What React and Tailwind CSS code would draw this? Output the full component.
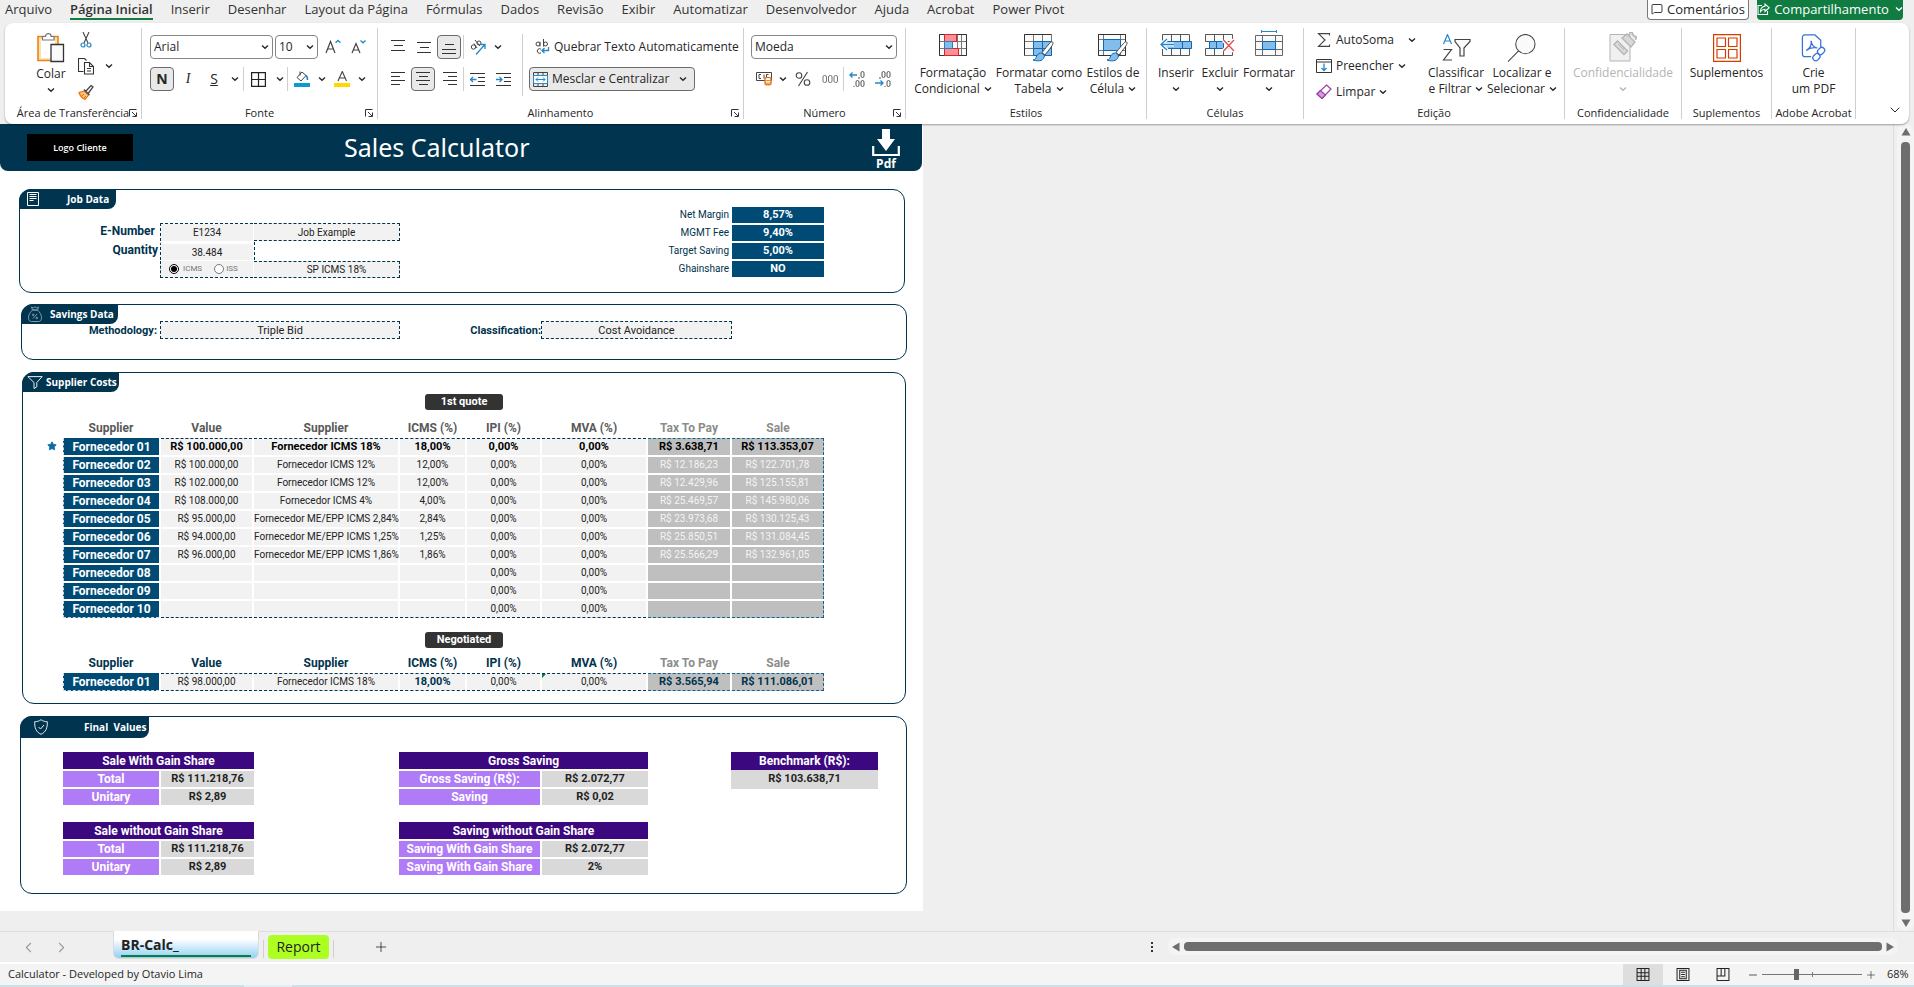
import { useState } from 'react';
import { ChevronDown, ChevronLeft, ChevronRight, Plus, Minus, Star, MessageSquare } from 'lucide-react';

const MENU = [
  'Arquivo', 'Página Inicial', 'Inserir', 'Desenhar', 'Layout da Página', 'Fórmulas', 'Dados', 'Revisão',
  'Exibir', 'Automatizar', 'Desenvolvedor', 'Ajuda', 'Acrobat', 'Power Pivot',
];

const QUOTES = [
  ['Fornecedor 01', 'R$ 100.000,00', 'Fornecedor ICMS 18%', '18,00%', '0,00%', '0,00%', 'R$ 3.638,71', 'R$ 113.353,07'],
  ['Fornecedor 02', 'R$ 100.000,00', 'Fornecedor ICMS 12%', '12,00%', '0,00%', '0,00%', 'R$ 12.186,23', 'R$ 122.701,78'],
  ['Fornecedor 03', 'R$ 102.000,00', 'Fornecedor ICMS 12%', '12,00%', '0,00%', '0,00%', 'R$ 12.429,96', 'R$ 125.155,81'],
  ['Fornecedor 04', 'R$ 108.000,00', 'Fornecedor ICMS 4%', '4,00%', '0,00%', '0,00%', 'R$ 25.469,57', 'R$ 145.980,06'],
  ['Fornecedor 05', 'R$ 95.000,00', 'Fornecedor ME/EPP ICMS 2,84%', '2,84%', '0,00%', '0,00%', 'R$ 23.973,68', 'R$ 130.125,43'],
  ['Fornecedor 06', 'R$ 94.000,00', 'Fornecedor ME/EPP ICMS 1,25%', '1,25%', '0,00%', '0,00%', 'R$ 25.850,51', 'R$ 131.084,45'],
  ['Fornecedor 07', 'R$ 96.000,00', 'Fornecedor ME/EPP ICMS 1,86%', '1,86%', '0,00%', '0,00%', 'R$ 25.566,29', 'R$ 132.961,05'],
  ['Fornecedor 08', '', '', '', '0,00%', '0,00%', '', ''],
  ['Fornecedor 09', '', '', '', '0,00%', '0,00%', '', ''],
  ['Fornecedor 10', '', '', '', '0,00%', '0,00%', '', ''],
];

const NEGOTIATED = [
  ['Fornecedor 01', 'R$ 98.000,00', 'Fornecedor ICMS 18%', '18,00%', '0,00%', '0,00%', 'R$ 3.565,94', 'R$ 111.086,01'],
];

const COLUMNS = ['Supplier', 'Value', 'Supplier', 'ICMS (%)', 'IPI (%)', 'MVA (%)', 'Tax To Pay', 'Sale'];

/* ---------- ribbon building blocks ---------- */

const Chevron = ({ className = '' }) => (
  <svg viewBox="0 0 8 8" className={`h-2 w-2 shrink-0 ${className}`} fill="none" stroke="currentColor" strokeWidth="1.4">
    <path d="M1 2.5 4 5.2 7 2.5" />
  </svg>
);

const Launcher = () => (
  <svg viewBox="0 0 8 8" className="h-2 w-2" fill="none" stroke="#333" strokeWidth="1">
    <path d="M.5 7.5V.5H7.5M3 3l4 4M7.5 3.5v4h-4" />
  </svg>
);

const Group = ({ label, width, launcher = false, children }) => (
  <section className={`flex shrink-0 flex-col self-start border-r border-[#cfcfcf] ${width}`}>
    <div className="flex h-[79px]">{children}</div>
    <div className="relative flex h-3 items-center justify-center text-[11px] whitespace-nowrap">
      {label}
      {launcher && (
        <button type="button" aria-label={`Opções de ${label}`} className="absolute top-0.5 right-1">
          <Launcher />
        </button>
      )}
    </div>
  </section>
);

const Divider = ({ className = 'h-6' }) => <div className={`w-px shrink-0 bg-[#cfcfcf] ${className}`} />;

const IconButton = ({ label, width = 'w-[26px]', pressed = false, children }) => (
  <button
    type="button"
    aria-label={label}
    aria-pressed={pressed}
    className={`flex h-6 shrink-0 items-center justify-center rounded ${width} ${pressed ? 'border border-[#6b6b6b] bg-[#e9e9e9]' : ''}`}
  >
    {children}
  </button>
);

const BigButton = ({ icon, lines, width, inline = true, disabled = false, arrow = true }) => (
  <button
    type="button"
    disabled={disabled}
    className={`flex shrink-0 flex-col items-center self-start pt-[3px] text-xs leading-4 whitespace-nowrap ${width} ${disabled ? 'text-[#b5b5b5]' : ''}`}
  >
    {icon}
    <span className="mt-[3px]">{lines[0]}</span>
    <span className="flex h-4 items-center gap-1">
      {lines[1]}
      {arrow && <Chevron className={inline ? '' : 'mx-auto'} />}
    </span>
  </button>
);

const SelectBox = ({ label, value, width }) => (
  <label className={`relative flex h-6 shrink-0 items-center rounded border border-[#868686] bg-white ${width}`}>
    <select aria-label={label} defaultValue={value} className="h-full w-full appearance-none bg-transparent pl-[3px] text-xs outline-none">
      <option>{value}</option>
    </select>
    <Chevron className="pointer-events-none absolute right-[3px]" />
  </label>
);

/* ---------- ribbon icons ---------- */

const PasteIcon = () => (
  <svg viewBox="0 0 28 31" className="h-[31px] w-7" fill="none">
    <path d="M1 4.5h20v24H1z" fill="#fbe3a6" stroke="#e8821e" strokeWidth="1.6" />
    <path d="M4 7h14v19H4z" fill="#fff" />
    <path d="M5.500 8V4.500h3a2.800 2.800 0 0 1 5.600 0h3V8z" fill="#fff" stroke="#777" strokeWidth="1.200" />
    <path d="M14 12.500h12.500v17H14z" fill="#fafafa" stroke="#333" strokeWidth="1.300" />
  </svg>
);

const CutIcon = () => (
  <svg viewBox="0 0 12 16" className="h-4 w-3" fill="none">
    <path d="M3 0l5 11M9 0L4 11" stroke="#444" strokeWidth="1.100" />
    <circle cx="3" cy="13" r="2" stroke="#2488c9" strokeWidth="1.200" />
    <circle cx="9" cy="13" r="2" stroke="#2488c9" strokeWidth="1.200" />
  </svg>
);

const CopyIcon = () => (
  <svg viewBox="0 0 16 17" className="h-[17px] w-4" fill="none" stroke="#333" strokeWidth="1.100">
    <path d="M5.500 13.500h-5V.5h6l2 2" />
    <path d="M6.500 4.500h5l4 4v7.500h-9zM11.500 4.500v4h4M9 10.500h4M9 13h4" />
  </svg>
);

const BrushIcon = () => (
  <svg viewBox="0 0 16 16" className="h-4 w-4" fill="none">
    <path d="M1 8.500l5.500-1.500 4 4L7 15.500C4 14 2 12 1 8.500z" fill="#fbc07c" stroke="#e8730c" strokeWidth="1.200" />
    <path d="M6 5.500l5.500 5.500M8 7l5-5.500 2 1.500-4.500 6" stroke="#444" strokeWidth="1.300" />
    <path d="M4 12l2-2M6 14l2-2" stroke="#e8730c" />
  </svg>
);

const BordersIcon = () => (
  <svg viewBox="0 0 15 15" className="h-[15px] w-[15px]" fill="none" stroke="#222" strokeWidth="1.200">
    <path d="M.6 .6h13.800v13.800H.6zM7.500 .6v13.800M.6 7.500h13.800" />
  </svg>
);

const BucketIcon = () => (
  <svg viewBox="0 0 16 16" className="h-4 w-4" fill="none">
    <path d="M8 1L3 6.500l4 3.500 5-5.500zM6 .5v4" stroke="#444" />
    <path d="M11 4.500c2 0 2.500 2 2.500 4.500" stroke="#1f7fc4" strokeWidth="1.600" />
    <path d="M0 12h16v4H0z" fill="#0d9ad3" />
  </svg>
);

const FontColorIcon = () => (
  <svg viewBox="0 0 16 16" className="h-4 w-4" fill="none">
    <path d="M4 10L8.300 .5 12.500 10M5.500 7h5.500" stroke="#444" strokeWidth="1.100" />
    <path d="M0 12h16v4H0z" fill="#ffd800" />
  </svg>
);

const GrowIcon = ({ down = false }) => (
  <svg viewBox="0 0 16 16" className="h-4 w-4" fill="none">
    {down ? (
      <path d="M1 14L5 4.500 9 14M2.500 11h5" stroke="#444" strokeWidth="1.200" />
    ) : (
      <path d="M1 14L5.500 2.500 10 14M2.700 10h5.700" stroke="#444" strokeWidth="1.200" />
    )}
    <path d={down ? 'M9.500 1.500l2.500 2.300 2.500-2.300' : 'M10.500 3.800L13 1.500l2.500 2.300'} stroke="#2488c9" strokeWidth="1.300" />
  </svg>
);

const LINES = {
  top: 'M0 1.500h14M3 6.500h9M0 11.500h14',
  middle: 'M0 3.500h14M3 8.500h9M0 13.500h14',
  bottom: 'M3 5.500h9M0 10.500h14M0 14.500h14',
  left: 'M0 1.500h14M0 5.500h9M0 9.500h14M0 13.500h9',
  center: 'M0 1.500h14M3 5.500h9M0 9.500h14M3 13.500h9',
  right: 'M0 1.500h14M5 5.500h9M0 9.500h14M5 13.500h9',
};

const AlignIcon = ({ kind }) => (
  <svg viewBox="0 0 14 16" className="h-4 w-3.5" stroke="#333" strokeWidth="1">
    <path d={LINES[kind]} />
  </svg>
);

const IndentIcon = ({ inward = false }) => (
  <svg viewBox="0 0 15 15" className="h-[15px] w-[15px]" fill="none">
    <path d="M0 1.500h15M8 5.500h7M8 9.500h7M0 13.500h15" stroke="#333" />
    <path d={inward ? 'M0 7.500h5.500M3.500 5l2.500 2.500L3.500 10' : 'M1 7.500h5.500M3 5L.5 7.500 3 10'} stroke="#2488c9" strokeWidth="1.300" />
  </svg>
);

const OrientationIcon = () => (
  <svg viewBox="0 0 16 16" className="h-4 w-4" fill="none">
    <circle cx="3.500" cy="8" r="2.200" stroke="#444" />
    <path d="M4 4.500l3 4.500M5 1l5 6" stroke="#444" />
    <circle cx="9" cy="4" r="2" stroke="#444" />
    <path d="M6 15.500L15 5.500M10.500 5.500H15V10" stroke="#2488c9" strokeWidth="1.300" />
  </svg>
);

const WrapIcon = () => (
  <svg viewBox="0 0 15 16" className="h-4 w-[15px] shrink-0" fill="none" stroke="#444">
    <circle cx="3" cy="5" r="2" />
    <path d="M5 2.800V7.500M8.500 0v7.500M6 10.200a2.300 2.300 0 1 0 0 3.600" />
    <circle cx="10.500" cy="5" r="2" />
    <path d="M13.500 8v3.500H7.500M9.500 9l-2.500 2.500L9.500 14" stroke="#2488c9" strokeWidth="1.400" />
  </svg>
);

const MergeIcon = () => (
  <svg viewBox="0 0 15 15" className="h-[15px] w-[15px] shrink-0" fill="none">
    <path d="M.5 .5h14v14H.5zM5 .5v3M10 .5v3M5 11.500v3M10 11.500v3" stroke="#444" />
    <path d="M.5 3.500h14v8H.5z" fill="#fff" stroke="#2488c9" />
    <path d="M3 7.500h9M5 5.500l-2 2 2 2M10 5.500l2 2-2 2" stroke="#2488c9" />
  </svg>
);

const CurrencyIcon = () => (
  <svg viewBox="0 0 16 14" className="h-3.5 w-4" fill="none">
    <path d="M.5 .5h15v8H.5z" stroke="#444" />
    <path d="M5 2.500H3v4h2M8 2.500v4M12.500 2.500h-2v3" stroke="#444" />
    <path d="M9 6.500c0-1.500 6-1.500 6 0v5c0 1.800-6 1.800-6 0z" fill="#fff" stroke="#e8730c" strokeWidth="1.300" />
    <path d="M9 8c1 1 5 1 6 0M9 10.500c1 1 5 1 6 0" stroke="#e8730c" />
  </svg>
);

const PercentIcon = () => (
  <svg viewBox="0 0 16 16" className="h-4 w-4" fill="none" stroke="#444" strokeWidth="1.100">
    <circle cx="4" cy="4.500" r="2.800" />
    <circle cx="12" cy="11.500" r="2.800" />
    <path d="M12.500 1L3.500 15" />
  </svg>
);

const ThousandsIcon = () => (
  <svg viewBox="0 0 17 8" className="h-2 w-[17px]" fill="none" stroke="#777">
    <rect x="1" y=".5" width="3.500" height="7" rx="1.500" />
    <rect x="6.500" y=".5" width="3.500" height="7" rx="1.500" />
    <rect x="12" y=".5" width="3.500" height="7" rx="1.500" />
  </svg>
);

const DecimalIcon = ({ less = false }) => (
  <svg viewBox="0 0 16 16" className="h-4 w-4" fill="none">
    <g stroke="#555">
      <rect x="12" y=".5" width="3" height="6" rx="1.500" />
      {less ? <rect x="7" y=".5" width="3" height="6" rx="1.500" /> : <rect x="7" y="9.500" width="3" height="6" rx="1.500" />}
      <rect x="12" y="9.500" width="3" height="6" rx="1.500" />
      <path d={less ? 'M5 6v2M10 15v1' : 'M10 6v2M5 15v1.500'} />
    </g>
    <path d={less ? 'M0 12h8M5.500 9.500L8 12l-2.500 2.500' : 'M1 4h7M3.500 1.500L1 4l2.500 2.500'} stroke="#2488c9" strokeWidth="1.400" />
  </svg>
);

const GRID = 'M.5 .5h27v21H.5zM9.500 .5v21M18.500 .5v21M.5 7.500h27M.5 14.500h27';

const CondFormatIcon = () => (
  <svg viewBox="0 0 28 28" className="h-7 w-7" fill="none">
    <path d="M.5 .5h27v21H.5zM5.500 .5v21M18.500 .5v21M22.500 .5v21M.5 7.500h27M.5 14.500h27" fill="#fafafa" stroke="#777" />
    <path d="M.5 .5h27v21H.5z" stroke="#333" />
    <path d="M5.500 .5h12v7h-12zM5.500 14.500h14v7h-14z" fill="#ff8f94" stroke="#d8232a" />
    <path d="M5.500 7.500h8v7h-8z" fill="#83bdec" stroke="#2b7cc0" />
  </svg>
);

const Paint = () => (
  <g>
    <path d="M28.500 8c1.500 1.500 0 3.500-7.500 13l-3-2.500C25 10 27 7 28.500 8z" fill="#fff" stroke="#444" />
    <path d="M17.500 19l3 2.500c-.5 5-5 6.500-11.500 4.500 3-.5 2.500-2 4-4.500 1-1.800 3-2.500 4.500-2.500z" fill="#83bdec" stroke="#1068b4" />
  </g>
);

const TableFormatIcon = () => (
  <svg viewBox="0 0 30 28" className="h-7 w-[30px]" fill="none">
    <path d={GRID} fill="#fafafa" stroke="#777" />
    <path d="M9.500 7.500h18v14h-18z" fill="#83bdec" />
    <path d="M9.500 7.500h18v14h-18zM18.500 7.500v14M9.500 14.500h18" stroke="#1068b4" />
    <path d="M.5 21.500V.5h27" stroke="#333" />
    <Paint />
  </svg>
);

const CellStyleIcon = () => (
  <svg viewBox="0 0 30 28" className="h-7 w-[30px]" fill="none">
    <path d="M.5 .5h27v21H.5zM5.500 .5v21M22.500 .5v21M.5 5.500h27M.5 16.500h27" fill="#fafafa" stroke="#777" />
    <path d="M.5 21.500V.5h27v21z" stroke="#333" />
    <path d="M5.500 5.500h17v11h-17z" fill="#83bdec" stroke="#1068b4" />
    <Paint />
  </svg>
);

const InsertIcon = () => (
  <svg viewBox="0 0 32 28" className="h-7 w-8" fill="none">
    <path d="M2.500 .5h27v21h-27zM11.500 .5v21M20.500 .5v21M2.500 7.500h27M2.500 14.500h27" fill="#fafafa" stroke="#555" />
    <path d="M0 7h12v8H0z" fill="#fff" />
    <path d="M6.500 7.500h25v7h-25zM22.500 7.500v7" fill="#83bdec" stroke="#1068b4" />
    <path d="M14 10.500H1.500M7 5l-6 5.500L7 16" stroke="#fff" strokeWidth="4" />
    <path d="M14 10.500H1.500M7 5l-6 5.500L7 16" stroke="#2488c9" strokeWidth="1.300" />
  </svg>
);

const DeleteIcon = () => (
  <svg viewBox="0 0 30 28" className="h-7 w-[30px]" fill="none">
    <path d="M.5 .5h27v7H.5zM.5 14.500h27v7H.5zM9.500 .5v7M18.500 .5v7M9.500 14.500v7M18.500 14.500v7" fill="#fafafa" stroke="#555" />
    <path d="M4.500 7.500h14v7h-14zM11.500 7.500v7" fill="#83bdec" stroke="#1068b4" />
    <path d="M18.500 6l10.500 11M29 6L18.500 17" stroke="#fff" strokeWidth="4" />
    <path d="M18.500 6l10.500 11M29 6L18.500 17" stroke="#e5484d" strokeWidth="1.300" />
  </svg>
);

const FormatIcon = () => (
  <svg viewBox="0 0 28 32" className="-mt-1 h-8 w-7" fill="none">
    <path d="M6 1.500h15.500M6.500 0v3M21.500 0v3" stroke="#2488c9" />
    <path d="M.5 5.500h27v20H.5zM7.500 5.500v20M20.500 5.500v20M.5 11.500h27M.5 19.500h27" fill="#fafafa" stroke="#666" />
    <path d="M7.500 11.500h13v8h-13z" fill="#83bdec" stroke="#1068b4" />
  </svg>
);

const SigmaIcon = () => (
  <svg viewBox="0 0 16 14" className="h-3.5 w-4" fill="none" stroke="#444" strokeWidth="1.100">
    <path d="M13.500 2.500V.6H2.500L9 7l-6.500 6.400h11V11.500" />
  </svg>
);

const FillIcon = () => (
  <svg viewBox="0 0 16 14" className="h-3.5 w-4" fill="none">
    <path d="M.5 .5h15v13H.5zM.5 3h15" stroke="#333" />
    <path d="M8 4.500v7M5.500 9L8 11.500 10.500 9" stroke="#2488c9" strokeWidth="1.300" />
  </svg>
);

const EraserIcon = () => (
  <svg viewBox="0 0 16 16" className="h-4 w-4" fill="none">
    <path d="M10.500 1L15 5 6 14.500 1 10z" fill="#fff" stroke="#9b3fa5" strokeWidth="1.200" />
    <path d="M4.500 6.500L1 10l5 4.500 3.500-3.500z" fill="#d79bdd" stroke="#9b3fa5" strokeWidth="1.200" />
  </svg>
);

const SortFilterIcon = () => (
  <svg viewBox="0 0 29 28" className="h-7 w-[29px]" fill="none" strokeWidth="1.200">
    <path d="M1.500 10L5.500 .5l4 9.500M3 7h5" stroke="#2488c9" />
    <path d="M1.500 15.500h8L1.500 26h8.500" stroke="#444" />
    <path d="M13 5.500h15v2L22 14v8h-4v-8l-5-6.500z" fill="#fafafa" stroke="#444" />
  </svg>
);

const FindIcon = () => (
  <svg viewBox="0 0 30 29" className="h-7 w-[30px]" fill="none" stroke="#444" strokeWidth="1.100">
    <circle cx="18.500" cy="10.500" r="10" fill="#fafafa" />
    <path d="M11.500 17.500L.5 28.500" />
  </svg>
);

const SensitivityIcon = () => (
  <svg viewBox="0 0 28 30" className="-mt-0.5 h-[30px] w-7" fill="none" stroke="#b5b5b5">
    <path d="M1 2.500h20v26.500H1z" fill="#f0f0f0" />
    <path d="M8.500 9l10 10-3.500 3.500-10-10z" fill="#dcdcdc" strokeWidth="1.400" />
    <path d="M9 12l6 6" />
    <path d="M13 6l5-4 8 8-4 5zM20 1l3-1 1.500 3.500 3 1.500-1 3" fill="#d8d8d8" strokeWidth="1.400" />
  </svg>
);

const AddinsIcon = () => (
  <svg viewBox="0 0 28 28" className="h-7 w-7" fill="none" stroke="#d83b01" strokeWidth="1.200">
    <path d="M.6 .6h26.800v26.800H.6zM4 4h8.500v8.500H4zM15.500 4H24v8.500h-8.500zM4 15.500h8.500V24H4zM15.500 15.500H24V24h-8.500z" />
  </svg>
);

const PdfIcon = () => (
  <svg viewBox="0 0 26 29" className="h-7 w-[26px]" fill="none" stroke="#3a72d8" strokeWidth="1.300">
    <path d="M10 23.500H3.500a2.500 2.500 0 0 1-2.500-2.500V3.500A2.500 2.500 0 0 1 3.500 1H14l6 5.500v7" />
    <path d="M5 17c4-2 5.500-6 5-10 .5 4 3 7 6.500 7.500C12 13.500 8 14.500 5 17z" />
    <rect x="16.500" y="15" width="8" height="6" rx="3" transform="rotate(-45 20 18)" />
    <rect x="11.500" y="21" width="8" height="6" rx="3" transform="rotate(-45 15.500 24)" />
  </svg>
);

const ShareIcon = () => (
  <svg viewBox="0 0 13 12" className="h-3 w-[13px]" fill="none" stroke="currentColor" strokeWidth="1.100">
    <path d="M5 2.500H1v9h9.500V8M8 1v2.200C5 3.500 3.500 5.500 3.500 8.500 4.500 7 6 6.200 8 6.200V8.500L12.200 4.700z" />
  </svg>
);

/* ---------- ribbon ---------- */

const MenuBar = () => (
  <nav className="flex h-[23px] items-start justify-between pr-[11px] pl-[5px] text-[13px] leading-[18px]">
    <div className="flex gap-[18px] text-[#333]">
      {MENU.map((item) => (
        <button
          key={item}
          type="button"
          className={`flex h-5 shrink-0 items-start whitespace-nowrap ${item === 'Página Inicial' ? 'border-b-2 border-[#107c41] font-semibold' : ''}`}
        >
          {item}
        </button>
      ))}
    </div>
    <div className="flex gap-2">
      <button type="button" className="flex h-5 w-[102px] items-center justify-center gap-1 rounded-b border border-t-0 border-[#777] bg-white pb-px">
        <MessageSquare size={12} strokeWidth={1.8} /> Comentários
      </button>
      <button type="button" className="flex h-5 w-[146px] items-center justify-center gap-1 rounded-b bg-[#107c41] pb-0.5 text-white">
        <ShareIcon /> Compartilhamento <Chevron className="ml-0.5" />
      </button>
    </div>
  </nav>
);

const ClipboardGroup = () => (
  <Group label="Área de Transferência" width="w-[137px]" launcher>
    <button type="button" className="ml-6 flex w-11 flex-col items-center self-start pt-1 text-xs leading-4">
      <PasteIcon />
      <span className="mt-[3px]">Colar</span>
      <span className="flex h-4 items-center">
        <Chevron />
      </span>
    </button>
    <div className="flex flex-col gap-0.5">
      <IconButton label="Recortar"><CutIcon /></IconButton>
      <div className="flex">
        <IconButton label="Copiar"><CopyIcon /></IconButton>
        <IconButton label="Opções de cópia" width="w-5"><Chevron /></IconButton>
      </div>
      <IconButton label="Pincel de Formatação"><BrushIcon /></IconButton>
    </div>
  </Group>
);

const FontGroup = () => (
  <Group label="Fonte" width="w-[236px]" launcher>
    <div className="flex flex-col gap-2 pt-[7px] pl-2">
      <div className="flex">
        <SelectBox label="Fonte" value="Arial" width="w-[123px]" />
        <div className="w-0.5" />
        <SelectBox label="Tamanho" value="10" width="w-[43px]" />
        <div className="w-0.5" />
        <IconButton label="Aumentar fonte"><GrowIcon /></IconButton>
        <IconButton label="Diminuir fonte"><GrowIcon down /></IconButton>
      </div>
      <div className="flex">
        <IconButton label="Negrito" width="w-6" pressed><span className="text-sm font-bold">N</span></IconButton>
        <IconButton label="Itálico" width="w-7"><span className="font-['Liberation_Serif'] text-sm italic">I</span></IconButton>
        <IconButton label="Sublinhado" width="w-6"><span className="text-sm underline">S</span></IconButton>
        <IconButton label="Opções de sublinhado" width="w-[17px]"><Chevron /></IconButton>
        <Divider />
        <IconButton label="Bordas" width="w-7"><BordersIcon /></IconButton>
        <IconButton label="Opções de bordas" width="w-[15px]"><Chevron /></IconButton>
        <Divider />
        <IconButton label="Cor de preenchimento" width="w-7"><BucketIcon /></IconButton>
        <IconButton label="Opções de preenchimento" width="w-3"><Chevron /></IconButton>
        <IconButton label="Cor da fonte" width="w-7"><FontColorIcon /></IconButton>
        <IconButton label="Opções de cor" width="w-3"><Chevron /></IconButton>
      </div>
    </div>
  </Group>
);

const AlignGroup = () => (
  <Group label="Alinhamento" width="w-[366px]" launcher>
    <div className="flex flex-col gap-2 pt-[7px] pl-[7px]">
      <div className="flex">
        <IconButton label="Alinhar em cima"><AlignIcon kind="top" /></IconButton>
        <IconButton label="Alinhar no meio"><AlignIcon kind="middle" /></IconButton>
        <IconButton label="Alinhar embaixo" width="w-6" pressed><AlignIcon kind="bottom" /></IconButton>
        <div className="w-0.5" />
        <Divider />
        <IconButton label="Orientação" width="w-7"><OrientationIcon /></IconButton>
        <IconButton label="Opções de orientação" width="w-3"><Chevron /></IconButton>
      </div>
      <div className="flex">
        <IconButton label="Alinhar à esquerda"><AlignIcon kind="left" /></IconButton>
        <IconButton label="Centralizar" width="w-6" pressed><AlignIcon kind="center" /></IconButton>
        <div className="w-0.5" />
        <IconButton label="Alinhar à direita"><AlignIcon kind="right" /></IconButton>
        <Divider />
        <IconButton label="Diminuir recuo"><IndentIcon /></IconButton>
        <IconButton label="Aumentar recuo"><IndentIcon inward /></IconButton>
      </div>
    </div>
    <Divider className="mt-1.5 ml-1.5 h-[62px]" />
    <div className="flex flex-col gap-2 pt-[7px] pl-1.5 text-xs whitespace-nowrap">
      <button type="button" className="flex h-6 items-center gap-1 pl-1.5">
        <WrapIcon /> Quebrar Texto Automaticamente
      </button>
      <button type="button" aria-pressed="true" className="flex h-6 w-[166px] items-center gap-1 rounded border border-[#6b6b6b] bg-[#e9e9e9] px-[3px]">
        <MergeIcon /> Mesclar e Centralizar <Chevron className="mr-1 ml-auto" />
      </button>
    </div>
  </Group>
);

const NumberGroup = () => (
  <Group label="Número" width="w-[162px]" launcher>
    <div className="flex flex-col gap-2 pt-[7px] pl-[7px]">
      <SelectBox label="Formato de número" value="Moeda" width="w-[146px]" />
      <div className="flex">
        <IconButton label="Formato de contabilização"><CurrencyIcon /></IconButton>
        <IconButton label="Opções de moeda" width="w-3"><Chevron /></IconButton>
        <IconButton label="Porcentagem" width="w-7"><PercentIcon /></IconButton>
        <IconButton label="Separador de milhares"><ThousandsIcon /></IconButton>
        <Divider />
        <IconButton label="Aumentar casas decimais"><DecimalIcon /></IconButton>
        <IconButton label="Diminuir casas decimais"><DecimalIcon less /></IconButton>
      </div>
    </div>
  </Group>
);

const EditGroup = () => (
  <Group label="Edição" width="w-[261px]">
    <div className="flex w-[122px] shrink-0 flex-col gap-0.5 pl-3 text-xs whitespace-nowrap">
      <button type="button" className="flex h-6 items-center gap-1">
        <SigmaIcon /> AutoSoma <Chevron className="mr-2.5 ml-auto" />
      </button>
      <button type="button" className="flex h-6 items-center gap-1">
        <FillIcon /> Preencher <Chevron />
      </button>
      <button type="button" className="flex h-6 items-center gap-1">
        <EraserIcon /> Limpar <Chevron />
      </button>
    </div>
    <div className="flex pt-[3px]">
      <BigButton icon={<SortFilterIcon />} lines={['Classificar', 'e Filtrar']} width="w-[60px]" />
      <BigButton icon={<FindIcon />} lines={['Localizar e', 'Selecionar']} width="w-[72px]" />
    </div>
  </Group>
);

const Ribbon = () => (
  <div className="relative z-10 mx-[5px] flex h-[101px] shrink-0 rounded-lg bg-white pt-[5px] text-[#262626] shadow-[0_1px_2px_rgba(0,0,0,0.35)]">
    <ClipboardGroup />
    <FontGroup />
    <AlignGroup />
    <NumberGroup />
    <Group label="Estilos" width="w-[241px]">
      <div className="flex gap-1 pt-[3px] pl-2">
        <BigButton icon={<CondFormatIcon />} lines={['Formatação', 'Condicional']} width="w-[78px]" />
        <BigButton icon={<TableFormatIcon />} lines={['Formatar como', 'Tabela']} width="w-[86px]" />
        <BigButton icon={<CellStyleIcon />} lines={['Estilos de', 'Célula']} width="w-[54px]" />
      </div>
    </Group>
    <Group label="Células" width="w-[157px]">
      <div className="flex pt-[3px] pl-2">
        <BigButton icon={<InsertIcon />} lines={['Inserir', '']} width="w-[42px]" inline={false} />
        <BigButton icon={<DeleteIcon />} lines={['Excluir', '']} width="w-[46px]" inline={false} />
        <BigButton icon={<FormatIcon />} lines={['Formatar', '']} width="w-[52px]" inline={false} />
      </div>
    </Group>
    <EditGroup />
    <Group label="Confidencialidade" width="w-[117px]">
      <div className="flex w-full justify-center pt-[3px]">
        <BigButton icon={<SensitivityIcon />} lines={['Confidencialidade', '']} width="w-[100px]" inline={false} disabled />
      </div>
    </Group>
    <Group label="Suplementos" width="w-[90px]">
      <div className="flex w-full justify-center pt-[3px]">
        <BigButton icon={<AddinsIcon />} lines={['Suplementos', '']} width="w-[80px]" arrow={false} />
      </div>
    </Group>
    <Group label="Adobe Acrobat" width="w-[84px]">
      <div className="flex w-full justify-center pt-[3px]">
        <BigButton icon={<PdfIcon />} lines={['Crie', 'um PDF']} width="w-[60px]" arrow={false} />
      </div>
    </Group>
    <button type="button" aria-label="Recolher faixa de opções" className="mr-1.5 mb-1.5 ml-auto self-end">
      <ChevronDown size={16} strokeWidth={1.5} />
    </button>
  </div>
);

/* ---------- worksheet ---------- */

const JobIcon = () => (
  <svg viewBox="0 0 12 14" className="h-3.5 w-3" fill="none" stroke="#fff">
    <path d="M.5 .5h11v13H.5zM2.500 2.500h7M2.500 4.500h7M2.500 6.500h7M2.500 8.500h4" />
  </svg>
);

const BagIcon = () => (
  <svg viewBox="0 0 14 16" className="h-4 w-3.5" fill="none" stroke="#8ea6b3" strokeWidth=".9">
    <path d="M4.500 4L3.500 1l2 .8L7 .8l1.500 1 2-.8-1 3zM4.500 4h5c2 2 4 4.500 4 7.500 0 2.500-1 4-3 4h-7c-2 0-3-1.500-3-4 0-3 2-5.500 4-7.500zM5 12.500L9 8" />
    <circle cx="5.200" cy="8.800" r=".8" />
    <circle cx="8.800" cy="12" r=".8" />
  </svg>
);

const FunnelIcon = () => (
  <svg viewBox="0 0 16 13" className="h-[13px] w-4" fill="none" stroke="#e7eef2">
    <path d="M.8 .6h14.400L9.800 6.500v4.300L7 12.500v-6z" />
  </svg>
);

const ShieldIcon = () => (
  <svg viewBox="0 0 14 16" className="h-4 w-3.5" fill="none" stroke="#dfe8ee">
    <path d="M7 .7c2 1.500 4 2 6.300 2C13.500 9 12 13 7 15.300 2 13 .5 9 .7 2.700 3 2.700 5 2.200 7 .7zM4.500 8l2 2L10 6" />
  </svg>
);

const Panel = ({ title, icon, tab, className, children }) => (
  <section className={`rounded-xl border border-[#00334d] ${className}`}>
    <h2 className={`-mt-px -ml-px flex items-center rounded-tl-xl rounded-br-lg bg-[#00344f] font-['Open_Sans','Noto_Sans',sans-serif] text-[10px] font-bold whitespace-pre text-white ${tab}`}>
      {icon}
      {title}
    </h2>
    {children}
  </section>
);

const RateRow = ({ label, value }) => (
  <tr>
    <th scope="row" className="h-4 pr-[3px] text-right text-[10px] font-normal text-[#00334d]">{label}</th>
    <td className="h-4 w-[92px] bg-[#004b76] text-center text-[11px] font-bold text-white">{value}</td>
  </tr>
);

const JobPanel = () => {
  const [tax, setTax] = useState('icms');
  return (
    <Panel title="Job Data" icon={<JobIcon />} tab="h-5 w-[97px] gap-7 pl-2" className="mr-[18px] ml-[19px] h-[104px]">
      <div className="flex text-[10px] leading-4 text-[#222]">
        <div className="mt-[14px] grid grid-cols-[139px_93px_146px] gap-x-px text-center">
          <label htmlFor="enumber" className="pr-1 text-right text-xs font-bold text-[#00334d]">E-Number</label>
          <input id="enumber" defaultValue="E1234" className="h-[18px] w-full border-t border-l border-dashed border-[#00334d] bg-[#f2f2f2] text-center" />
          <input aria-label="Job" defaultValue="Job Example" className="h-[18px] w-full border border-l-0 border-dashed border-[#00334d] bg-[#f2f2f2] text-center" />
          <label htmlFor="quantity" className="pr-px text-right text-xs font-bold text-[#00334d]">Quantity</label>
          <input id="quantity" defaultValue="38.484" className="h-[18px] w-full border-t-2 border-l border-dashed border-[#00334d] border-t-white bg-[#f2f2f2] text-center [border-top-style:solid]" />
          <div className="h-[18px] border-l border-dashed border-[#00334d]" />
          <span />
          <fieldset className="flex h-[17px] items-center gap-3 border-b border-l border-dashed border-[#00334d] bg-[#f2f2f2] pl-2 text-[8px] text-[#777]">
            <label className="flex items-center gap-1">
              <input type="radio" name="tax" className="h-2.5 w-2.5 accent-black" checked={tax === 'icms'} onChange={() => setTax('icms')} />
              ICMS
            </label>
            <label className="flex items-center gap-0.5">
              <input type="radio" name="tax" className="h-2.5 w-2.5 accent-black" checked={tax === 'iss'} onChange={() => setTax('iss')} />
              ISS
            </label>
          </fieldset>
          <input aria-label="Regime" defaultValue="SP ICMS 18%" className="h-[17px] w-full border border-l-0 border-dashed border-[#00334d] bg-[#f2f2f2] pl-5 text-center" />
        </div>
        <table className="-mt-1 mr-20 ml-auto h-fit border-separate border-spacing-x-0 border-spacing-y-0.5">
          <tbody>
            <RateRow label="Net Margin" value="8,57%" />
            <RateRow label="MGMT Fee" value="9,40%" />
            <RateRow label="Target Saving" value="5,00%" />
            <RateRow label="Ghainshare" value="NO" />
          </tbody>
        </table>
      </div>
    </Panel>
  );
};

const SavingsPanel = () => (
  <Panel title="Savings Data" icon={<BagIcon />} tab="h-5 w-[97px] gap-2 pl-[7px]" className="mt-[11px] mr-4 ml-[21px] h-14">
    <div className="-mt-[3px] flex text-[11px] text-[#222]">
      <label htmlFor="method" className="w-[138px] pt-0.5 pr-[3px] text-right font-bold text-[#00334d]">Methodology:</label>
      <input id="method" defaultValue="Triple Bid" className="h-[18px] w-[240px] border border-dashed border-[#00334d] bg-[#f2f2f2] text-center" />
      <label htmlFor="classification" className="w-[141px] pt-0.5 text-right font-bold text-[#00334d]">Classification:</label>
      <input id="classification" defaultValue="Cost Avoidance" className="h-[18px] w-[191px] border border-dashed border-[#00334d] bg-[#f2f2f2] text-center" />
    </div>
  </Panel>
);

const cellTone = (col, rowIndex, highlight) => {
  if (highlight === 'first') {
    if (rowIndex === 0) return 'text-[11px] font-bold text-black';
    return col > 5 ? 'text-[10px] text-[#f4f4f4]' : 'text-[10px] text-[#222]';
  }
  return col === 3 || col > 5 ? 'text-[11px] font-bold text-[#00334d]' : 'text-[10px] text-[#222]';
};

const QuoteTable = ({ rows, head, highlight }) => (
  <table className="-mt-0.5 ml-[38px] w-[765px] table-fixed border-separate border-spacing-0.5 text-center leading-4 whitespace-nowrap">
    <colgroup>
      <col className="w-[96px]" />
      <col className="w-[91px]" />
      <col className="w-[144px]" />
      <col className="w-[65px]" />
      <col className="w-[73px]" />
      <col className="w-[104px]" />
      <col className="w-[82px]" />
      <col className="w-[92px]" />
    </colgroup>
    <thead>
      <tr>
        {COLUMNS.map((name, i) => (
          <th key={i} scope="col" className={`h-4 p-0 text-xs leading-4 font-bold ${i > 5 ? 'text-[#8c8c8c]' : head}`}>{name}</th>
        ))}
      </tr>
    </thead>
    <tbody>
      {rows.map((row, r) => (
        <tr key={row[0]}>
          {row.map((value, c) => {
            const edges = [
              r === 0 && c > 0 ? 'border-t' : '',
              r === rows.length - 1 ? 'border-b' : '',
              c === 0 ? 'border-l' : '',
              c === 7 ? 'border-r' : '',
            ].join(' ');
            if (c === 0) {
              return (
                <th key={c} scope="row" className={`relative h-4 border-dashed border-[#c9dbe6] bg-[#004b76] p-0 text-xs leading-4 font-bold text-white ${edges}`}>
                  {value}
                  {highlight === 'first' && r === 0 && (
                    <Star size={10} className="absolute top-[3px] -left-[17px] fill-[#0a6aa6] text-[#0a6aa6]" />
                  )}
                </th>
              );
            }
            return (
              <td
                key={c}
                className={`relative h-4 border-dashed p-0 ${c > 5 ? 'border-[#0a6496] bg-[#bfbfbf]' : 'border-[#00334d] bg-[#f2f2f2]'} ${cellTone(c, r, highlight)} ${edges}`}
              >
                {value}
                {highlight === 'last' && c === 5 && (
                  <span className="absolute top-0 left-0 border-t-4 border-r-4 border-t-green-700 border-r-transparent" />
                )}
              </td>
            );
          })}
        </tr>
      ))}
    </tbody>
  </table>
);

const Badge = ({ children }) => (
  <div className="ml-[402px] flex h-4 w-[78px] items-center justify-center rounded-[3px] bg-[#333] text-[11px] font-bold text-white">
    {children}
  </div>
);

const SupplierPanel = () => (
  <Panel title="Supplier Costs" icon={<FunnelIcon />} tab="h-5 w-[97px] gap-[3px] pl-[5px]" className="mt-3 mr-[17px] ml-[22px] h-[332px]">
    <div className="mt-0.5">
      <Badge>1st quote</Badge>
      <div className="h-2.5" />
      <QuoteTable rows={QUOTES} head="text-[#595959]" highlight="first" />
    </div>
    <div className="mt-3">
      <Badge>Negotiated</Badge>
      <div className="h-[7px]" />
      <QuoteTable rows={NEGOTIATED} head="text-[#00334d]" highlight="last" />
    </div>
  </Panel>
);

const ValueTable = ({ title, rows, cols, width }) => (
  <table className={`table-fixed border-separate border-spacing-x-0 border-spacing-y-0.5 text-center leading-4 whitespace-nowrap ${width}`}>
    <colgroup>
      <col className={cols} />
      <col />
    </colgroup>
    <thead>
      <tr>
        <th colSpan={2} className="h-[17px] bg-[#3c0880] p-0 text-xs leading-4 font-bold text-white">{title}</th>
      </tr>
    </thead>
    <tbody>
      {rows.map(([label, value], i) => (
        <tr key={i}>
          <th scope="row" className="h-4 border-r-2 border-white bg-[#b07bf7] p-0 text-xs leading-4 font-bold text-white">{label}</th>
          <td className="h-4 bg-[#d9d9d9] p-0 text-[11px] font-bold text-[#222]">{value}</td>
        </tr>
      ))}
    </tbody>
  </table>
);

const FinalPanel = () => (
  <Panel title="Final  Values" icon={<ShieldIcon />} tab="h-[22px] w-[129px] gap-9 pl-3.5" className="mt-3 mr-4 ml-5 h-[178px]">
    <div className="mt-3 ml-[42px] flex items-start">
      <div className="flex flex-col gap-[13px]">
        <ValueTable title="Sale With Gain Share" cols="w-[98px]" width="w-[191px]" rows={[['Total', 'R$ 111.218,76'], ['Unitary', 'R$ 2,89']]} />
        <ValueTable title="Sale without Gain Share" cols="w-[98px]" width="w-[191px]" rows={[['Total', 'R$ 111.218,76'], ['Unitary', 'R$ 2,89']]} />
      </div>
      <div className="ml-[145px] flex flex-col gap-[13px]">
        <ValueTable title="Gross Saving" cols="w-[143px]" width="w-[249px]" rows={[['Gross Saving (R$):', 'R$ 2.072,77'], ['Saving', 'R$ 0,02']]} />
        <ValueTable title="Saving without Gain Share" cols="w-[143px]" width="w-[249px]" rows={[['Saving With Gain Share', 'R$ 2.072,77'], ['Saving With Gain Share', '2%']]} />
      </div>
      <dl className="mt-0.5 ml-[83px] w-[147px] text-center">
        <dt className="h-[18px] bg-[#3c0880] text-xs leading-[18px] font-bold text-white">Benchmark (R$):</dt>
        <dd className="h-[19px] bg-[#d9d9d9] text-[11px] leading-[18px] font-bold text-[#222]">R$ 103.638,71</dd>
      </dl>
    </div>
  </Panel>
);

const DownloadIcon = () => (
  <svg viewBox="0 0 28 28" className="h-7 w-7" fill="none">
    <path d="M10 0h8v10h5l-9 12-9-12h5z" fill="#fff" />
    <path d="M1.200 17v9h25.600v-9" stroke="#fff" strokeWidth="2.200" />
  </svg>
);

const Sheet = () => (
  <main className="h-[787px] w-[923px] bg-white font-[Roboto,sans-serif]">
    <header className="mr-px flex h-[47px] items-center rounded-b-lg bg-[#00344f] pr-[18px] pl-[27px] font-['Open_Sans','Noto_Sans',sans-serif] text-white">
      <div className="flex h-[27px] w-[106px] items-center justify-center bg-black text-[9px] font-semibold">Logo Cliente</div>
      <h1 className="ml-[211px] font-['Noto_Sans',sans-serif] text-[25px]">Sales Calculator</h1>
      <button type="button" className="ml-auto flex w-9 flex-col items-center pt-1 text-xs leading-[14px] font-bold">
        <DownloadIcon />
        Pdf
      </button>
    </header>
    <div className="pt-[18px]">
      <JobPanel />
      <SavingsPanel />
      <SupplierPanel />
      <FinalPanel />
    </div>
  </main>
);

const VerticalScroll = () => (
  <div className="ml-[3px] flex w-[17px] flex-col items-center gap-1.5 rounded-lg bg-[#f4f4f4] py-1">
    <svg viewBox="0 0 10 8" className="h-2 w-2.5" fill="#6e6e6e"><path d="M5 0l4.500 7.500H.5z" /></svg>
    <div className="w-[9px] flex-1 rounded bg-[#6e6e6e]" />
    <svg viewBox="0 0 10 8" className="h-2 w-2.5" fill="#6e6e6e"><path d="M5 8L9.500 .5H.5z" /></svg>
  </div>
);

const SheetTabs = () => (
  <div className="flex h-8 shrink-0 items-start border-b-2 border-white pr-4">
    <button type="button" aria-label="Planilha anterior" className="mt-[7px] ml-5 text-[#9a9a9a]"><ChevronLeft size={17} strokeWidth={1.5} /></button>
    <button type="button" aria-label="Próxima planilha" className="mt-[7px] ml-4 text-[#9a9a9a]"><ChevronRight size={17} strokeWidth={1.5} /></button>
    <button type="button" className="-mt-px ml-[43px] h-[28px] w-[146px] rounded-b-md border border-t-0 border-[#dcdcdc] bg-gradient-to-b from-white from-30% to-[#8fd0f2] px-[7px] text-left text-sm font-bold text-[#222]">
      <span className="block h-[25px] border-b-2 border-[#107c41] leading-[25px]">BR-Calc_</span>
    </button>
    <Divider className="mt-2 ml-[4px] h-[18px]" />
    <button type="button" className="mt-[3px] ml-1 h-6 w-[61px] rounded bg-[#adff22] text-sm text-[#222]">Report</button>
    <Divider className="mt-2 ml-1 h-[18px]" />
    <button type="button" aria-label="Nova planilha" className="mt-[7px] ml-[39px]"><Plus size={16} strokeWidth={1.2} /></button>
    <div className="mt-[10px] ml-auto flex flex-col gap-[2px]">
      <i className="h-0.5 w-0.5 bg-[#333]" />
      <i className="h-0.5 w-0.5 bg-[#333]" />
      <i className="h-0.5 w-0.5 bg-[#333]" />
    </div>
    <div className="mt-1.5 ml-[15px] flex h-[17px] w-[calc(38%+9px)] items-center gap-1 rounded-lg bg-[#f4f4f4] px-1">
      <svg viewBox="0 0 8 10" className="h-2.5 w-2" fill="#6e6e6e"><path d="M0 5L7.500 .5v9z" /></svg>
      <div className="h-[9px] flex-1 rounded bg-[#6e6e6e]" />
      <svg viewBox="0 0 8 10" className="h-2.5 w-2" fill="#6e6e6e"><path d="M8 5L.5 .5v9z" /></svg>
    </div>
  </div>
);

const VIEWS = [
  { label: 'Normal', path: 'M.6 .6h12.800v12.800H.6zM5 .6v12.800M9 .6v12.800M.6 5h12.800M.6 9h12.800' },
  { label: 'Layout da Página', path: 'M.6 .6h12.800v12.800H.6zM3.500 2.500h7v9h-7zM5 4.500h4M5 7h4M5 9.500h4' },
  { label: 'Quebra de Página', path: 'M.6 .6h12.800v12.800H.6zM.6 8.500h8.400V.6M5 .6v7.900' },
];

const StatusBar = () => {
  const [zoom, setZoom] = useState(34);
  return (
    <footer className="flex h-[21px] shrink-0 items-center bg-[#f4f4f4] pr-[3px] pl-2 text-[11px] text-[#262626]">
      <span className="flex-1">Calculator - Developed by Otavio Lima</span>
      {VIEWS.map((view, i) => (
        <button key={view.label} type="button" aria-label={view.label} className={`flex h-full w-10 items-center justify-center ${i === 0 ? 'bg-[#dedede]' : ''}`}>
          <svg viewBox="0 0 14 14" className="h-[13px] w-[14px]" fill="none" stroke="#222" strokeWidth="1.100"><path d={view.path} /></svg>
        </button>
      ))}
      <button type="button" aria-label="Menos zoom" className="ml-1"><Minus size={12} strokeWidth={1.5} /></button>
      <div className="relative mx-[3px] flex w-[100px] items-center">
        <input
          type="range"
          aria-label="Zoom"
          value={zoom}
          onChange={(e) => setZoom(Number(e.target.value))}
          className="h-px w-full appearance-none bg-[#777] [&::-webkit-slider-thumb]:h-[11px] [&::-webkit-slider-thumb]:w-[5px] [&::-webkit-slider-thumb]:appearance-none [&::-webkit-slider-thumb]:bg-[#666]"
        />
        <i className="absolute left-1/2 h-[5px] w-px bg-[#777]" />
      </div>
      <button type="button" aria-label="Mais zoom"><Plus size={12} strokeWidth={1.2} /></button>
      <span className="ml-2.5 w-6">68%</span>
    </footer>
  );
};

export default function App() {
  return (
    <div className="flex h-screen flex-col overflow-hidden bg-[#efefef] font-['Open_Sans','Noto_Sans',sans-serif] text-[#262626]">
      <MenuBar />
      <Ribbon />
      <div className="flex min-h-0 flex-1 border-b border-[#dedede]">
        <div className="min-w-0 flex-1 overflow-hidden border-r border-[#dedede]">
          <Sheet />
        </div>
        <VerticalScroll />
      </div>
      <SheetTabs />
      <StatusBar />
      <div className="flex h-0.5 shrink-0 bg-[#cbe0e7]">
        <div className="ml-[244px] w-12 bg-[#e1eff3]" />
      </div>
    </div>
  );
}
